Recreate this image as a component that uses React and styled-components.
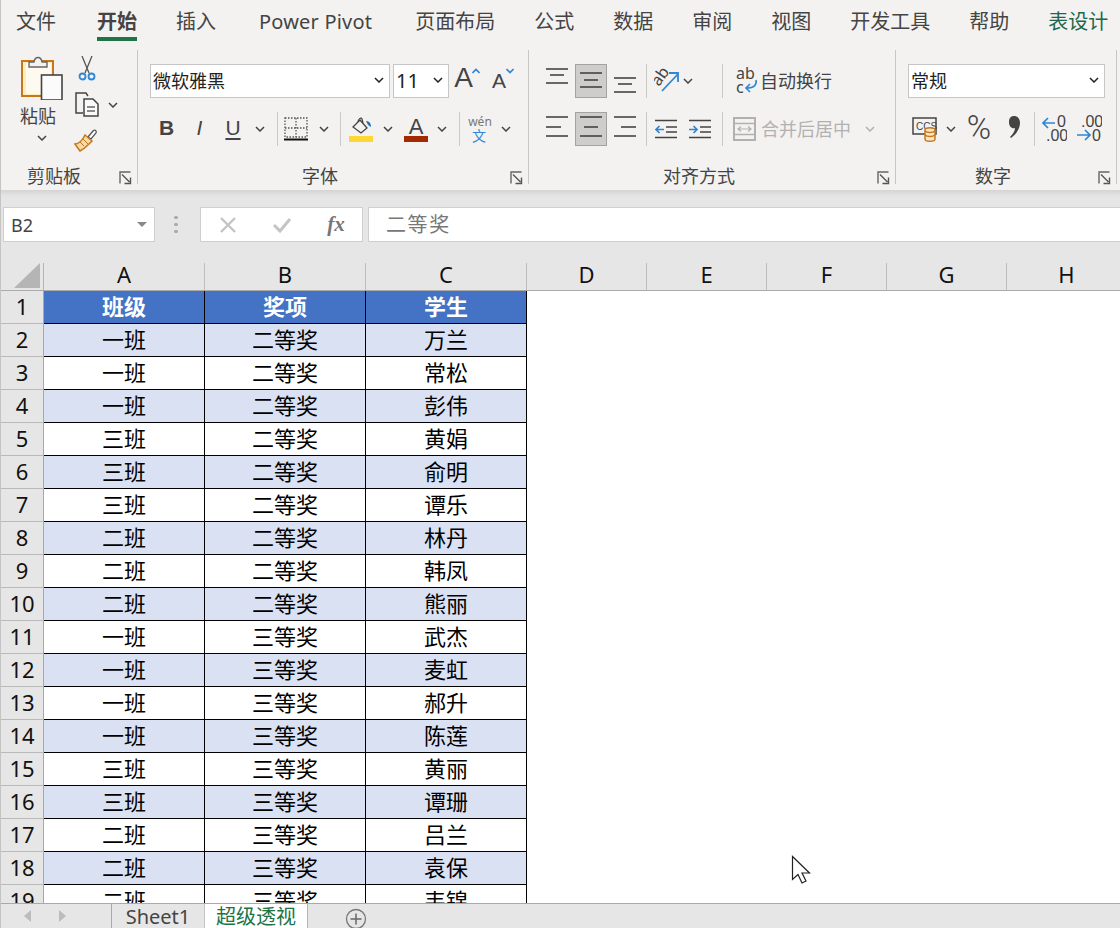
import React from 'react'
import styled, { createGlobalStyle } from 'styled-components'

const Global = createGlobalStyle`
  html, body { margin: 0; padding: 0; background: #fff; }
  body { font-family: "Noto Sans", "Noto Sans CJK SC", sans-serif; }
`

const Page = styled.div`
  position: relative;
  width: 1120px;
  height: 928px;
  box-sizing: border-box;
  border-left: 1px solid #c4c4c4;
  display: flex;
  flex-direction: column;
  overflow: hidden;
  background: #fff;
`

const TabBar = styled.div`
  height: 50px;
  flex: none;
  display: flex;
  gap: 39px;
  padding-left: 15px;
  background: #f3f2f1;
  white-space: nowrap;
`

const Tab = styled.div`
  height: 41px;
  box-sizing: border-box;
  margin: ${p => (p.$active ? '0 0 0 2px' : p.$latin ? '0 4px' : '0')};
  padding-top: 8px;
  line-height: 28px;
  font-size: 20px;
  letter-spacing: ${p => (p.$latin ? '0.2px' : '0')};
  color: ${p => (p.$green ? '#21664a' : '#444')};
  font-weight: ${p => (p.$active ? 700 : 400)};
  border-bottom: 4px solid ${p => (p.$active ? '#217346' : 'transparent')};
`

const Ribbon = styled.div`
  height: 140px;
  flex: none;
  display: flex;
  background: #f3f2f1;
`

const Group = styled.div`
  width: ${p => p.$w}px;
  flex: none;
  display: flex;
  flex-direction: column;
`

const GroupBody = styled.div`
  padding: 14px 0 0 ${p => p.$pad || 0}px;
  display: flex;
  flex-direction: column;
  gap: 14px;
`

const Divider = styled.div`
  width: 1px;
  height: 134px;
  flex: none;
  background: #c8c6c4;
`

const LabelRow = styled.div`
  margin-top: auto;
  height: 28px;
  display: flex;
  padding-right: 5px;
`

const LabelText = styled.div`
  flex: 1;
  padding-right: ${p => p.$pr || 8}px;
  text-align: center;
  font-size: 18px;
  line-height: 28px;
  color: #444;
`

const Launcher = styled.svg`
  width: 13px;
  height: 14px;
  margin-top: 9px;
  flex: none;
`

const Row = styled.div`
  height: 34px;
  display: flex;
  align-items: center;
`

const Slot = styled.div`
  width: ${p => p.$w}px;
  margin-left: ${p => p.$ml || 0}px;
  flex: none;
  display: flex;
  align-items: center;
  justify-content: center;
  color: #444;
`

const RaisedSlot = styled(Slot)`
  align-self: flex-start;
  margin-top: ${p => p.$top}px;
`

const GlyphSlot = styled(Slot)`
  padding-bottom: ${p => p.$pb}px;
`

const ActiveSlot = styled(Slot)`
  height: 34px;
  box-sizing: border-box;
  background: #cfcdcb;
  border: 1px solid #a5a3a1;
`

const Sep = styled.div`
  width: 1px;
  height: 34px;
  flex: none;
  margin-left: ${p => p.$ml || 0}px;
  background: #cbc9c7;
`

const Select = styled.div`
  width: ${p => p.$w}px;
  margin-left: ${p => p.$ml || 0}px;
  height: 34px;
  box-sizing: border-box;
  flex: none;
  display: flex;
  align-items: center;
  justify-content: space-between;
  padding: 0 5px 2px 2px;
  background: #fff;
  border: 1px solid #c6c6c6;
  font-size: ${p => p.$size || 18}px;
  color: #222;
`

const BigFont = styled.span`
  font-family: ${p => p.$family || '"Liberation Sans"'}, sans-serif;
  font-size: ${p => p.$size || 18}px;
  font-weight: ${p => p.$weight || 400};
  font-style: ${p => (p.$italic ? 'italic' : 'normal')};
  text-decoration: ${p => (p.$under ? 'underline' : 'none')};
  text-decoration-thickness: 1.500px;
  text-underline-offset: 3px;
  line-height: 1;
  color: #444;
`

const ActionText = styled.span`
  font-size: 18px;
  margin: -2px 0 0 ${p => p.$ml || 0}px;
  color: ${p => (p.$off ? '#b3b1af' : '#444')};
  white-space: nowrap;
`

const ClipBody = styled.div`
  display: flex;
  padding: 6px 0 0 19px;
`

const PasteCol = styled.div`
  width: 44px;
  display: flex;
  flex-direction: column;
  align-items: center;
`

const PasteText = styled.div`
  align-self: flex-start;
  font-size: 18px;
  line-height: 20px;
  margin-top: 6px;
  margin-bottom: 9px;
  color: #444;
  white-space: nowrap;
`

const ClipTools = styled.div`
  display: flex;
  flex-direction: column;
  margin-left: 10px;
`

const ClipTool = styled.div`
  height: ${p => p.$h}px;
  display: flex;
  align-items: flex-start;
  padding-left: ${p => p.$pad || 0}px;
`

const CopyChev = styled(Slot)`
  height: 25px;
`

const FormulaBar = styled.div`
  height: 73px;
  flex: none;
  box-sizing: border-box;
  padding: 17px 0 0 2px;
  display: flex;
  align-items: flex-start;
  background: linear-gradient(#d4d4d4, #e4e4e4 6px, #e6e6e6 9px);
`

const FormulaBox = styled.div`
  height: 35px;
  box-sizing: border-box;
  width: ${p => p.$w}px;
  margin-left: ${p => p.$ml || 0}px;
  flex: none;
  display: flex;
  align-items: center;
  background: #fff;
  border: 1px solid #cfcfcf;
`

const NameText = styled.span`
  flex: 1;
  padding-left: 7px;
  font-size: 18px;
  color: #444;
`

const FormulaText = styled.span`
  padding: 0 0 2px 17px;
  font-size: 20px;
  letter-spacing: 1.600px;
  color: #777;
`

const Dots = styled.div`
  margin-left: 19px;
  width: 4px;
  height: 35px;
  flex: none;
  background: radial-gradient(circle, #aaa 1.600px, transparent 2px) center / 4px 7px repeat-y;
  clip-path: inset(9px 0 9px 0);
`

const FxButton = styled.div`
  width: 54px;
  flex: none;
  display: flex;
  justify-content: center;
  align-items: center;
`

const FxText = styled.span`
  font-family: "Liberation Serif", serif;
  font-style: italic;
  font-weight: 700;
  font-size: 21px;
  color: #777;
`

const ColHeadRow = styled.div`
  height: 28px;
  box-sizing: border-box;
  flex: none;
  display: grid;
  grid-template-columns: 43px 161px 161px 161px repeat(5, 120px);
  background: #e6e6e6;
  border-bottom: 1px solid #ababab;
`

const Corner = styled.div`
  display: flex;
  align-items: flex-end;
  justify-content: flex-end;
  padding: 0 3px 2px 0;
  border-right: 1px solid #b4b4b4;
`

const ColHead = styled.div`
  box-sizing: border-box;
  text-align: center;
  font-size: 22px;
  line-height: 22px;
  color: #111;
  border-right: 1px solid #bdbdbd;
`

const Sheet = styled.div`
  flex: 1;
  min-height: 0;
  overflow: hidden;
`

const DataRow = styled.div`
  display: grid;
  grid-template-columns: 43px 161px 161px 161px;
  height: 33px;
`

const RowHead = styled.div`
  box-sizing: border-box;
  background: #e6e6e6;
  border-right: 1px solid #a8a8a8;
  border-bottom: 1px solid #b9b9b9;
  text-align: center;
  font-size: 22px;
  line-height: 30px;
  color: #111;
`

const Cell = styled.div`
  box-sizing: border-box;
  border-right: 1px solid #000;
  border-bottom: 1px solid #000;
  text-align: center;
  font-size: 22px;
  line-height: 30px;
  color: ${p => (p.$head ? '#fff' : '#000')};
  font-weight: ${p => (p.$head ? 700 : 400)};
  background: ${p => (p.$head ? '#4472c4' : p.$band ? '#d9e1f2' : '#fff')};
`

const SheetBar = styled.div`
  height: 25px;
  flex: none;
  box-sizing: border-box;
  display: flex;
  align-items: stretch;
  background: #e6e6e6;
  border-top: 1px solid #a9a9a9;
`

const NavArrows = styled.div`
  width: 111px;
  flex: none;
  box-sizing: border-box;
  display: flex;
  align-items: center;
  gap: 28px;
  padding-left: 23px;
  border-right: 1px solid #a9a9a9;
`

const SheetTab = styled.div`
  margin-left: ${p => p.$ml || 0}px;
  padding-right: ${p => p.$pr || 0}px;
  width: ${p => p.$w}px;
  flex: none;
  box-sizing: border-box;
  text-align: center;
  font-size: 20px;
  line-height: 25px;
  color: ${p => (p.$active ? '#217346' : '#444')};
  background: ${p => (p.$active ? '#fff' : 'transparent')};
  border-right: 1px solid ${p => (p.$active ? '#b4b4b4' : '#c4c4c4')};
`

const AddSheet = styled.svg`
  width: 22px;
  height: 22px;
  margin: 4px 0 0 37px;
  flex: none;
`

const Cursor = styled.svg`
  position: absolute;
  left: 789px;
  top: 855px;
  width: 22px;
  height: 30px;
`

const Chev = ({ color = '#444' }) => (
  <svg width="10" height="6" viewBox="0 0 10 6">
    <path d="M1 1l4 4 4-4" fill="none" stroke={color} strokeWidth="1.500" />
  </svg>
)

const LauncherIcon = () => (
  <Launcher viewBox="0 0 13 14">
    <path d="M11.500 1H1v11.500" fill="none" stroke="#666" strokeWidth="1.400" />
    <path d="M3 3.500l7.500 7.500M11.500 6.500v6h-6" fill="none" stroke="#555" strokeWidth="1.400" />
  </Launcher>
)

const ClipboardIcon = () => (
  <svg width="42" height="44" viewBox="0 0 42 44">
    <rect x="1" y="5" width="31" height="35" fill="#fdeebb" stroke="#c8771c" strokeWidth="2" />
    <rect x="5" y="7" width="25" height="31" fill="#fffaf0" />
    <path d="M8 11V6h5c1-6 7-6 8 0h5v5z" fill="#f3f2f1" stroke="#666" strokeWidth="1.400" />
    <rect x="20.500" y="19" width="20.500" height="25" fill="#fbfbfb" stroke="#444" strokeWidth="1.600" />
  </svg>
)

const ScissorsIcon = () => (
  <svg width="18" height="25" viewBox="0 0 18 25">
    <path d="M4 0l7 17M14 0L7 17" fill="none" stroke="#555" strokeWidth="1.300" />
    <circle cx="4.500" cy="20.500" r="3" fill="none" stroke="#2e86d4" strokeWidth="1.800" />
    <circle cx="13.500" cy="20.500" r="3" fill="none" stroke="#2e86d4" strokeWidth="1.800" />
  </svg>
)

const CopyIcon = () => (
  <svg width="25" height="25" viewBox="0 0 25 25">
    <path d="M9 21H2V1h10l2 3" fill="none" stroke="#444" strokeWidth="1.500" />
    <path d="M10 7h9l5 5v12H10z" fill="#f9f9f9" stroke="#444" strokeWidth="1.500" />
    <path d="M13 15h8M13 19h8" stroke="#666" strokeWidth="1.300" />
  </svg>
)

const BrushIcon = () => (
  <svg width="25" height="24" viewBox="0 0 25 24">
    <path d="M14 9l5-6c2-2 4 0 3 2l-5 6z" fill="#fff" stroke="#555" strokeWidth="1.300" />
    <path d="M11 7l7 6-3 3c-4 4-7 6-9 7l-5-7c4 0 7-3 10-9z" fill="#f7d9a8" stroke="#c8771c" strokeWidth="1.500" />
    <path d="M6 14l4 4M9 11l5 5" stroke="#c8771c" strokeWidth="1" />
  </svg>
)

const FontGrow = ({ up }) => (
  <svg width="8" height="6" viewBox="0 0 8 6">
    <path d={up ? 'M0.500 5L4 1.500 7.500 5' : 'M0.500 1L4 4.500 7.500 1'} fill="none" stroke="#2e86d4" strokeWidth="1.600" />
  </svg>
)

const BorderIcon = () => (
  <svg width="25" height="24" viewBox="0 0 25 24">
    <rect x="1" y="1" width="22" height="19" fill="none" stroke="#555" strokeWidth="1.300" strokeDasharray="1.500 1.500" />
    <path d="M12 1v19M1 11h22" stroke="#555" strokeWidth="1.300" strokeDasharray="1.500 1.500" />
    <path d="M0 22.500h24" stroke="#111" strokeWidth="2" />
  </svg>
)

const FillIcon = () => (
  <svg width="25" height="26" viewBox="0 0 25 26">
    <path d="M4 11l7-7 7 8-6 5z" fill="#f3f2f1" stroke="#444" strokeWidth="1.300" />
    <path d="M9 6c0-3 3-5 4-3l1 4" fill="none" stroke="#444" strokeWidth="1.200" />
    <path d="M17 5c3 0 5 2 5 6l-3-2z" fill="#1f6fbf" />
    <rect x="0" y="20" width="24" height="6" fill="#fdd835" />
  </svg>
)

const FontColorIcon = () => (
  <svg width="25" height="26" viewBox="0 0 25 26">
    <text x="12" y="18" textAnchor="middle" fontFamily="Liberation Sans" fontSize="22" fill="#444">A</text>
    <rect x="0" y="20" width="24" height="6" fill="#a32a00" />
  </svg>
)

const WenIcon = () => (
  <svg width="24" height="28" viewBox="0 0 24 28">
    <text x="12" y="11" textAnchor="middle" fontFamily="Noto Sans" fontSize="12" fill="#777">wén</text>
    <text x="11" y="26" textAnchor="middle" fontFamily="Noto Sans CJK SC" fontSize="14" fill="#2e86d4">文</text>
  </svg>
)

const LinesIcon = ({ ys, align = 'center' }) => (
  <svg width="22" height="26" viewBox="0 0 22 26">
    {ys.map((y, i) => {
      const short = i === 1
      let x1 = 0
      let x2 = 22
      if (short && align === 'center') { x1 = 4; x2 = 18 }
      if (short && align === 'left') { x2 = 15 }
      if (short && align === 'right') { x1 = 7 }
      return <path key={i} d={`M${x1} ${y}H${x2}`} stroke="#444" strokeWidth="1.600" />
    })}
  </svg>
)

const OrientIcon = () => (
  <svg width="28" height="30" viewBox="0 0 28 30">
    <text x="0" y="0" transform="translate(5 21) rotate(-55)" fontFamily="Noto Sans" fontSize="16" fill="#444">ab</text>
    <path d="M8 25L24 8M15 7h9v9" fill="none" stroke="#2e86d4" strokeWidth="1.800" />
  </svg>
)

const IndentIcon = ({ back }) => (
  <svg width="23" height="20" viewBox="0 0 23 20">
    <path d="M0 1.500h22M11 8h11M11 13h11M0 18.500h22" stroke="#444" strokeWidth="1.500" />
    {back
      ? <path d="M9 10.500H1M4.500 7l-3.500 3.500 3.500 3.500" fill="none" stroke="#2e86d4" strokeWidth="1.700" />
      : <path d="M0 10.500h8M4.500 7L8 10.500 4.500 14" fill="none" stroke="#2e86d4" strokeWidth="1.700" />}
  </svg>
)

const WrapIcon = () => (
  <svg width="22" height="28" viewBox="0 0 22 28">
    <text x="0" y="12" fontFamily="Noto Sans" fontSize="16" fill="#444">ab</text>
    <text x="0" y="26" fontFamily="Noto Sans" fontSize="16" fill="#444">c</text>
    <path d="M20 13c1 5-2 8-9 8M14 17l-4 4 4 4" fill="none" stroke="#2e86d4" strokeWidth="1.600" />
  </svg>
)

const MergeIcon = () => (
  <svg width="23" height="24" viewBox="0 0 23 24">
    <rect x="1" y="1" width="21" height="22" fill="none" stroke="#b3b1af" strokeWidth="2" />
    <path d="M1 6.500h21M1 17.500h21" stroke="#b3b1af" strokeWidth="1.400" />
    <path d="M5 12h13M8 9.500L5 12l3 2.500M15 9.500l3 2.500-3 2.500" fill="none" stroke="#b3b1af" strokeWidth="1.200" />
  </svg>
)

const CurrencyIcon = () => (
  <svg width="25" height="26" viewBox="0 0 25 26">
    <rect x="1" y="2" width="23" height="16" fill="#f3f2f1" stroke="#444" strokeWidth="1.500" />
    <text x="4" y="14" fontFamily="Liberation Sans" fontSize="10" fill="#444">CCS</text>
    <path d="M13 14c0-3 10-3 10 0v9c0 3-10 3-10 0z" fill="#fbe7c6" stroke="#c8771c" strokeWidth="1.500" />
    <path d="M13 15c2 2 8 2 10 0M13 19c2 2 8 2 10 0" fill="none" stroke="#c8771c" strokeWidth="1.500" />
  </svg>
)

const CommaIcon = () => (
  <svg width="15" height="24" viewBox="0 0 13 24">
    <path d="M6 1c4 0 6 3 6 7 0 6-4 11-9 15l-1-1c3-3 5-6 5-9-3 1-6-1-6-6 0-4 2-6 5-6z" fill="#444" />
  </svg>
)

const DecimalIcon = ({ more }) => (
  <svg width="25" height="28" viewBox="0 0 25 28">
    <text x={more ? 4 : 15} y="12" fontFamily="Liberation Sans" fontSize="16" fill="#444">{more ? '.00' : '0'}</text>
    <text x={more ? 15 : 4} y="26" fontFamily="Liberation Sans" fontSize="16" fill="#444">{more ? '0' : '.00'}</text>
    {more
      ? <path d="M0 20h12M8 15l5 5-5 5" fill="none" stroke="#2e86d4" strokeWidth="1.700" />
      : <path d="M13 8H1M6 3L1 8l5 5" fill="none" stroke="#2e86d4" strokeWidth="1.700" />}
  </svg>
)

const rows = [
  ['一班', '二等奖', '万兰'], ['一班', '二等奖', '常松'], ['一班', '二等奖', '彭伟'],
  ['三班', '二等奖', '黄娟'], ['三班', '二等奖', '俞明'], ['三班', '二等奖', '谭乐'],
  ['二班', '二等奖', '林丹'], ['二班', '二等奖', '韩凤'], ['二班', '二等奖', '熊丽'],
  ['一班', '三等奖', '武杰'], ['一班', '三等奖', '麦虹'], ['一班', '三等奖', '郝升'],
  ['一班', '三等奖', '陈莲'], ['三班', '三等奖', '黄丽'], ['三班', '三等奖', '谭珊'],
  ['二班', '三等奖', '吕兰'], ['二班', '三等奖', '袁保'], ['二班', '三等奖', '韦锦'],
]

const tabs = ['文件', '开始', '插入', 'Power Pivot', '页面布局', '公式', '数据', '审阅', '视图', '开发工具', '帮助', '表设计']

export default function App() {
  return (
    <Page>
      <Global />
      <TabBar>
        {tabs.map(t => (
          <Tab key={t} $active={t === '开始'} $green={t === '表设计'} $latin={t === 'Power Pivot'}>{t}</Tab>
        ))}
      </TabBar>

      <Ribbon>
        <Group $w={136}>
          <ClipBody>
            <PasteCol>
              <ClipboardIcon />
              <PasteText>粘贴</PasteText>
              <Chev />
            </PasteCol>
            <ClipTools>
              <ClipTool $h={36} $pad={4}><ScissorsIcon /></ClipTool>
              <ClipTool $h={36}>
                <CopyIcon />
                <CopyChev $w={28}><Chev /></CopyChev>
              </ClipTool>
              <ClipTool $h={26}><BrushIcon /></ClipTool>
            </ClipTools>
          </ClipBody>
          <LabelRow>
            <LabelText $pr={12}>剪贴板</LabelText>
            <LauncherIcon />
          </LabelRow>
        </Group>
        <Divider />

        <Group $w={390}>
          <GroupBody $pad={12}>
            <Row>
              <Select $w={240}>微软雅黑<Chev color="#222" /></Select>
              <Select $w={56} $ml={3} $size={20}>11<Chev color="#222" /></Select>
              <GlyphSlot $w={17} $ml={6} $pb={6}><BigFont $size={28}>A</BigFont></GlyphSlot>
              <RaisedSlot $w={8} $top={4}><FontGrow up /></RaisedSlot>
              <GlyphSlot $w={14} $ml={12} $pb={2}><BigFont $size={21}>A</BigFont></GlyphSlot>
              <RaisedSlot $w={8} $top={4}><FontGrow /></RaisedSlot>
            </Row>
            <Row>
              <GlyphSlot $w={33} $pb={4}><BigFont $size={21} $weight={700}>B</BigFont></GlyphSlot>
              <GlyphSlot $w={33} $pb={4}><BigFont $size={21} $italic>I</BigFont></GlyphSlot>
              <GlyphSlot $w={34} $pb={4}><BigFont $size={21} $under>U</BigFont></GlyphSlot>
              <Slot $w={20}><Chev /></Slot>
              <Sep $ml={7} />
              <Slot $w={25} $ml={6}><BorderIcon /></Slot>
              <Slot $w={10} $ml={10}><Chev /></Slot>
              <Sep $ml={11} />
              <Slot $w={25} $ml={8}><FillIcon /></Slot>
              <Slot $w={10} $ml={9}><Chev /></Slot>
              <Slot $w={25} $ml={11}><FontColorIcon /></Slot>
              <Slot $w={10} $ml={8}><Chev /></Slot>
              <Sep $ml={12} />
              <Slot $w={24} $ml={8}><WenIcon /></Slot>
              <Slot $w={10} $ml={9}><Chev /></Slot>
            </Row>
          </GroupBody>
          <LabelRow>
            <LabelText>字体</LabelText>
            <LauncherIcon />
          </LabelRow>
        </Group>
        <Divider />

        <Group $w={366}>
          <GroupBody $pad={17}>
            <Row>
              <Slot $w={22}><LinesIcon ys={[1, 7, 15]} /></Slot>
              <ActiveSlot $w={32} $ml={7}><LinesIcon ys={[5, 12, 19]} /></ActiveSlot>
              <Slot $w={22} $ml={7}><LinesIcon ys={[10, 16, 24]} /></Slot>
              <Sep $ml={10} />
              <Slot $w={28} $ml={7}><OrientIcon /></Slot>
              <Slot $w={10} $ml={1}><Chev /></Slot>
              <Sep $ml={29} />
              <Slot $w={22} $ml={13}><WrapIcon /></Slot>
              <ActionText $ml={2}>自动换行</ActionText>
            </Row>
            <Row>
              <Slot $w={22}><LinesIcon ys={[1, 11, 20]} align="left" /></Slot>
              <ActiveSlot $w={32} $ml={7}><LinesIcon ys={[1, 11, 20]} /></ActiveSlot>
              <Slot $w={22} $ml={7}><LinesIcon ys={[1, 11, 20]} align="right" /></Slot>
              <Sep $ml={10} />
              <Slot $w={23} $ml={8}><IndentIcon back /></Slot>
              <Slot $w={23} $ml={11}><IndentIcon /></Slot>
              <Sep $ml={10} />
              <Slot $w={23} $ml={10}><MergeIcon /></Slot>
              <ActionText $ml={5} $off>合并后居中</ActionText>
              <Slot $w={10} $ml={14}><Chev color="#b3b1af" /></Slot>
            </Row>
          </GroupBody>
          <LabelRow>
            <LabelText>对齐方式</LabelText>
            <LauncherIcon />
          </LabelRow>
        </Group>
        <Divider />

        <Group $w={220}>
          <GroupBody $pad={12}>
            <Row>
              <Select $w={197}>常规<Chev color="#222" /></Select>
            </Row>
            <Row>
              <Slot $w={25} $ml={4}><CurrencyIcon /></Slot>
              <Slot $w={10} $ml={9}><Chev /></Slot>
              <GlyphSlot $w={26} $ml={10} $pb={4}><BigFont $size={33} $family="Roboto" $weight={300}>%</BigFont></GlyphSlot>
              <GlyphSlot $w={15} $ml={15} $pb={4}><CommaIcon /></GlyphSlot>
              <Sep $ml={12} />
              <Slot $w={25} $ml={7}><DecimalIcon /></Slot>
              <Slot $w={25} $ml={10}><DecimalIcon more /></Slot>
            </Row>
          </GroupBody>
          <LabelRow>
            <LabelText>数字</LabelText>
            <LauncherIcon />
          </LabelRow>
        </Group>
        <Divider />
      </Ribbon>

      <FormulaBar>
        <FormulaBox $w={152}>
          <NameText>B2</NameText>
          <Slot $w={24}>
            <svg width="10" height="5" viewBox="0 0 10 5"><path d="M0 0h10L5 5z" fill="#888" /></svg>
          </Slot>
        </FormulaBox>
        <Dots />
        <FormulaBox $w={163} $ml={22}>
          <FxButton>
            <svg width="20" height="20" viewBox="0 0 20 20"><path d="M3 3l14 14M17 3L3 17" stroke="#c4c4c4" strokeWidth="2.400" /></svg>
          </FxButton>
          <FxButton>
            <svg width="20" height="18" viewBox="0 0 20 18"><path d="M2 9l6 6L18 3" fill="none" stroke="#c4c4c4" strokeWidth="3" /></svg>
          </FxButton>
          <FxButton><FxText>fx</FxText></FxButton>
        </FormulaBox>
        <FormulaBox $w={760} $ml={5}>
          <FormulaText>二等奖</FormulaText>
        </FormulaBox>
      </FormulaBar>

      <ColHeadRow>
        <Corner>
          <svg width="26" height="25" viewBox="0 0 26 25"><path d="M26 0v25H0z" fill="#b5b5b5" /></svg>
        </Corner>
        {['A', 'B', 'C', 'D', 'E', 'F', 'G', 'H'].map(c => <ColHead key={c}>{c}</ColHead>)}
      </ColHeadRow>

      <Sheet>
        <DataRow>
          <RowHead>1</RowHead>
          <Cell $head>班级</Cell>
          <Cell $head>奖项</Cell>
          <Cell $head>学生</Cell>
        </DataRow>
        {rows.map((r, i) => (
          <DataRow key={i}>
            <RowHead>{i + 2}</RowHead>
            {r.map((v, j) => <Cell key={j} $band={i % 2 === 0}>{v}</Cell>)}
          </DataRow>
        ))}
      </Sheet>

      <SheetBar>
        <NavArrows>
          <svg width="7" height="12" viewBox="0 0 7 12"><path d="M7 0v12L0 6z" fill="#bcbcbc" /></svg>
          <svg width="7" height="12" viewBox="0 0 7 12"><path d="M0 0v12l7-6z" fill="#bcbcbc" /></svg>
        </NavArrows>
        <SheetTab $w={88} $ml={5} $pr={5}>Sheet1</SheetTab>
        <SheetTab $w={103} $active>超级透视</SheetTab>
        <AddSheet viewBox="0 0 22 22">
          <circle cx="11" cy="11" r="9.500" fill="none" stroke="#777" strokeWidth="1.300" />
          <path d="M11 5.500v11M5.500 11h11" stroke="#666" strokeWidth="1.500" />
        </AddSheet>
      </SheetBar>

      <Cursor viewBox="0 0 22 30">
        <path d="M2.500 1.500v23l5.500-5 4 8.500 4-2-4-8h7.500z" fill="#fff" stroke="#222" strokeWidth="1.200" />
      </Cursor>
    </Page>
  )
}
